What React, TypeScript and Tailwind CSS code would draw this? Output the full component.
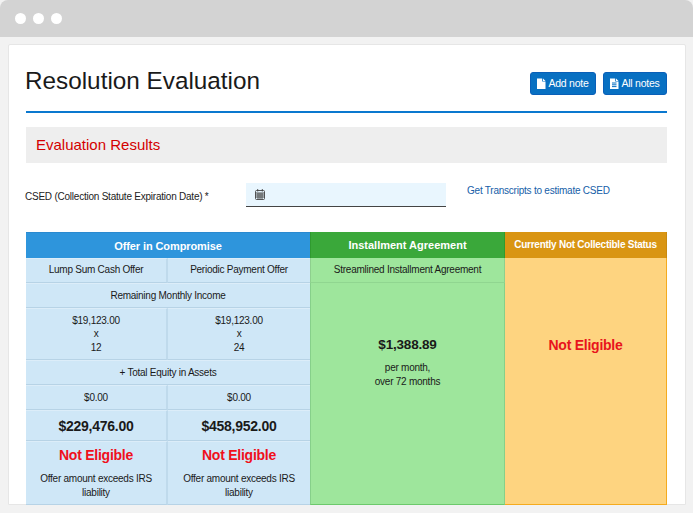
import React from "react";

const Note = ({ lines }: { lines?: boolean }) => (
  <svg width="9" height="11" viewBox="0 0 9 11" className="shrink-0">
    <path d="M0 0.5h5.2v3h3.3V11H0z" fill="#fff" />
    <path d="M6 0.5l2.5 2.4H6z" fill="#fff" />
    {lines && <path d="M2 5h4.5M2 6.8h4.5M2 8.6h4.5" stroke="#0870c2" strokeWidth="1" />}
  </svg>
);

const Calendar = () => (
  <svg width="10" height="11" viewBox="0 0 10 11" fill="none" stroke="#444" strokeWidth="0.9">
    <rect x="0.5" y="1.5" width="9" height="9" rx="1" />
    <path d="M0.5 4h9M0.5 6h9M0.5 8h9M3 4v6M5 4v6M7 4v6M2.7 0v2.5M7.3 0v2.5" />
  </svg>
);

const c = "flex flex-col items-center justify-center text-center bg-[#cfe7f7] border-t border-t-[#dcedf9] border-b border-b-[#b7d3e6]";
const r = "border-r-2 border-r-[#bfdaec]";
const big = "text-[14px] tracking-[-0.27px] font-bold";
const bad = "text-[14px] leading-[18px] tracking-[-0.25px] font-bold text-[#f0101c] mb-[8px] -mt-[1px]";

export default function App() {
  return (
    <div className="w-[693px] h-[513px] overflow-hidden bg-[#f2f2f2] font-['Liberation_Sans',Arial,sans-serif] text-[#1a1a1a]">
      <div className="h-[37px] bg-[#d3d3d3] rounded-t-[8px] flex items-center gap-[7px] pl-[15px] pb-[1px]">
        <span className="w-[11px] h-[11px] rounded-full bg-white" />
        <span className="w-[11px] h-[11px] rounded-full bg-white" />
        <span className="w-[11px] h-[11px] rounded-full bg-white" />
      </div>
      <div className="mt-[7px] ml-[8px] w-[678px] h-[461px] bg-white border border-[#e6e6e6] rounded-t-[2px] pl-[17px] pr-[18px]">
        <div className="h-[68px] border-b-2 border-[#0a78cf] flex items-start justify-between">
          <h1 className="text-[24.3px] leading-[30px] mt-[21px] -ml-[1px] text-[#1a1a1a]">Resolution Evaluation</h1>
          <div className="flex gap-[7px] mt-[27px]">
            <button className="h-[23px] w-[66px] flex items-center justify-center gap-[2px] bg-[#0870c2] border border-[#0a5fb8] rounded-[3px] text-white text-[10.5px] tracking-[-0.25px]">
              <Note /> Add note
            </button>
            <button className="h-[23px] w-[64px] flex items-center justify-center gap-[2px] bg-[#0870c2] border border-[#0a5fb8] rounded-[3px] text-white text-[10.5px] tracking-[-0.25px]">
              <Note lines /> All notes
            </button>
          </div>
        </div>
        <div className="mt-[14px] h-[36px] bg-[#eeeeee] flex items-center pl-[10px] text-[15px] text-[#d40000]">
          Evaluation Results
        </div>
        <div className="h-[69px] flex items-start">
          <div className="mt-[28px] w-[220px] -ml-[1px] mr-[1px] text-[10px] tracking-[-0.23px] leading-[12px] text-[#222]">CSED (Collection Statute Expiration Date) *</div>
          <div className="mt-[20px] w-[200px] h-[24px] bg-[#e9f6fe] border-b border-[#444] flex items-center pl-[9px]">
            <Calendar />
          </div>
          <a className="mt-[22px] ml-[21px] text-[10px] tracking-[-0.23px] leading-[12px] text-[#1560a8]">Get Transcripts to estimate CSED</a>
        </div>
        <div className="grid grid-cols-[142px_142px_195px_162px] grid-rows-[26px_25px_25px_52px_25px_25px_31px_64px] text-[10px] tracking-[-0.25px] leading-[14px] w-[641px]">
          <div className="col-span-2 flex items-center justify-center bg-[#2e95dc] text-white font-bold text-[11px] tracking-[-0.1px] border-t border-[#2a8ad0]">Offer in Compromise</div>
          <div className="flex items-center justify-center bg-[#3aa83a] text-white font-bold text-[11px] tracking-normal border-x border-[#2f9a2f]">Installment Agreement</div>
          <div className="flex items-center justify-center bg-[#d99513] text-white font-bold text-[10px] border-r border-[#c98a10]">Currently Not Collectible Status</div>

          <div className={`${c} ${r} pb-[1px]`}>Lump Sum Cash Offer</div>
          <div className={`${c} pb-[1px]`}>Periodic Payment Offer</div>
          <div className="flex items-center justify-center bg-[#9ee69c] border-x border-x-[#8ed08e] border-b border-b-[#90d690] pb-[1px]">Streamlined Installment Agreement</div>
          <div className="row-span-7 flex items-center justify-center bg-[#fed480] border-r border-[#f5ab1e] border-b border-b-[#f5ab1e] text-[14px] tracking-[-0.25px] font-bold text-[#e8141c] pb-[72px]">Not Eligible</div>

          <div className={`${c} col-span-2`}>Remaining Monthly Income</div>
          <div className="row-span-6 flex flex-col items-center justify-center bg-[#9ee69c] border-x border-x-[#86d08a] border-b border-b-[#6cc96c] pb-[63px]">
            <div className="text-[13.5px] tracking-[-0.2px] leading-[18px] font-bold">$1,388.89</div>
            <div className="mt-[7px]">per month,</div>
            <div>over 72 months</div>
          </div>

          <div className={`${c} ${r} leading-[13.5px]`}><span>$19,123.00</span><span>x</span><span>12</span></div>
          <div className={`${c} leading-[13.5px]`}><span>$19,123.00</span><span>x</span><span>24</span></div>

          <div className={`${c} col-span-2`}>+ Total Equity in Assets</div>

          <div className={`${c} ${r}`}>$0.00</div>
          <div className={c}>$0.00</div>

          <div className={`${c} ${r} ${big}`}>$229,476.00</div>
          <div className={`${c} ${big}`}>$458,952.00</div>

          <div className={`${c} ${r}`}>
            <span className={bad}>Not Eligible</span>
            <span>Offer amount exceeds IRS<br />liability</span>
          </div>
          <div className={c}>
            <span className={bad}>Not Eligible</span>
            <span>Offer amount exceeds IRS<br />liability</span>
          </div>
        </div>
      </div>
    </div>
  );
}
